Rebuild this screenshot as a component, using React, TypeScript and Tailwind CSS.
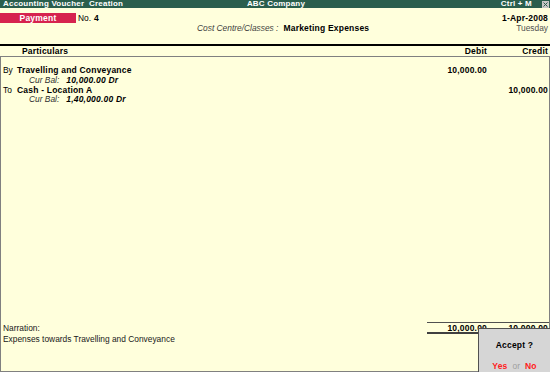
import React from 'react';

const entries = [
  { side: 'By', ledger: 'Travelling and Conveyance', balance: '10,000.00 Dr', debit: '10,000.00', credit: '' },
  { side: 'To', ledger: 'Cash - Location A', balance: '1,40,000.00 Dr', debit: '', credit: '10,000.00' },
];

const bold = "font-['Liberation_Sans',Arial,sans-serif] font-bold text-[8.5px] tracking-[0.2px] leading-[10px]";
const plain = "font-['Liberation_Sans',Arial,sans-serif] text-[8.4px] leading-[10px]";

export default function App() {
  return (
    <div className="relative w-[550px] h-[372px] overflow-hidden bg-[#ffffdc] text-black flex flex-col">
      {/* Title bar */}
      <div className={`h-[8px] bg-[#2a5e4d] text-white flex items-center justify-between pl-[3px] pr-[1px] ${bold} !leading-[8px] !text-[8px]`}>
        <span className="w-[200px] whitespace-pre">Accounting Voucher  Creation</span>
        <span>ABC Company</span>
        <div className="w-[200px] flex justify-end items-center gap-[10px]">
          <span>Ctrl + M</span>
          <span className="w-[7px] h-[7px] bg-[#c8c8c8] flex items-center justify-center">
            <svg width="5" height="5" viewBox="0 0 5 5">
              <path d="M0.5 0.5L4.5 4.5M4.5 0.5L0.5 4.5" stroke="#2a5e4d" strokeWidth="1" />
            </svg>
          </span>
        </div>
      </div>

      {/* Voucher header */}
      <div className="h-[36px] pt-[5px] pr-[2px]">
        <div className="h-[10px] flex items-center justify-between">
          <div className="flex items-center">
            <div className={`w-[76px] h-[10px] bg-[#d6234f] text-white flex items-center justify-center ${bold}`}>Payment</div>
            <span className={`${plain} ml-[2px]`}>No.</span>
            <span className={`${bold} ml-[3px]`}>4</span>
          </div>
          <span className={bold}>1-Apr-2008</span>
        </div>
        <div className="h-[10px] flex items-center">
          <span className={`${plain} italic text-[#404040] ml-[197px]`}>Cost Centre/Classes :</span>
          <span className={`${bold} ml-[5px]`}>Marketing Expenses</span>
          <span className={`${plain} text-[#505050] ml-auto`}>Tuesday</span>
        </div>
      </div>

      {/* Column header */}
      <div className={`h-[13px] border-t-2 border-black border-b border-b-[#808080] grid grid-cols-[1fr_70px_61px] pr-[2px] items-center ${bold}`}>
        <span className="pl-[22px]">Particulars</span>
        <span className="text-right">Debit</span>
        <span className="text-right">Credit</span>
      </div>

      {/* Entries */}
      <div className="flex-1 border-x border-[#808080] pt-[8px] pr-[1px]">
        {entries.map((e) => (
          <div key={e.ledger}>
            <div className="h-[10px] grid grid-cols-[1fr_70px_61px] items-center">
              <div className="flex items-center pl-[2px]">
                <span className={`${plain} w-[14px]`}>{e.side}</span>
                <span className={bold}>{e.ledger}</span>
              </div>
              <span className={`${bold} text-right`}>{e.debit}</span>
              <span className={`${bold} text-right`}>{e.credit}</span>
            </div>
            <div className="h-[9.5px] flex items-center pl-[28px]">
              <span className={`${plain} italic text-[#303030]`}>Cur Bal:</span>
              <span className={`${bold} italic ml-[7px]`}>{e.balance}</span>
            </div>
          </div>
        ))}
      </div>

      {/* Footer: narration and totals */}
      <div className="h-[50px] border-x border-b border-[#808080] flex items-start">
        <div className={`flex-1 pl-[2px] pt-[1px] ${plain} !leading-[11px] text-[#202020]`}>
          <div>Narration:</div>
          <div>Expenses towards Travelling and Conveyance</div>
        </div>
        <div className={`w-[122px] h-[12px] border-t border-t-[#505050] border-b-2 border-b-[#404040] grid grid-cols-[60px_1fr] items-center pr-[1px] ${bold}`}>
          <span className="text-right">10,000.00</span>
          <span className="text-right">10,000.00</span>
        </div>
      </div>

      {/* Accept dialog */}
      <div className="absolute right-0 bottom-0 w-[72px] h-[44px] bg-[#d6d6d6] border-l border-t border-[#505050] flex flex-col items-center">
        <span className={`${bold} mt-[11px]`}>Accept ?</span>
        <div className="mt-[11px] flex items-center gap-[5px]">
          <span className={`${bold} text-[#ff2020]`}>Yes</span>
          <span className={`${plain} text-[#a0a0a0]`}>or</span>
          <span className={`${bold} text-[#ff2020]`}>No</span>
        </div>
      </div>
    </div>
  );
}
